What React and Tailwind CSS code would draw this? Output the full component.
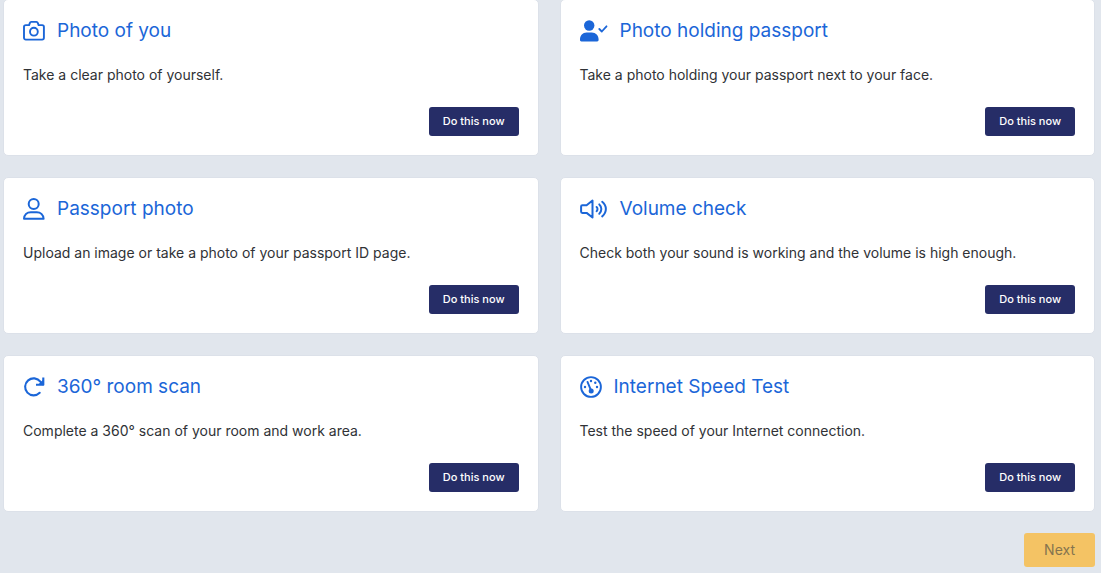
function CameraIcon() {
  return (
    <svg viewBox="0 0 22 22" className="h-[22px] w-[22px]" fill="none" stroke="currentColor" strokeWidth="1.9" strokeLinejoin="round" aria-hidden="true">
      <path d="M2.9 5.1h3.2l.8-2.2c.2-.6.7-1 1.3-1h5.2c.7 0 1.2.4 1.4 1l.8 2.2h3.5c1 0 1.8.7 1.8 1.7v11c0 1-.8 1.8-1.8 1.8H2.8c-1 0-1.8-.8-1.8-1.8v-11c0-1 .8-1.7 1.9-1.7Z" />
      <circle cx="10.9" cy="11.7" r="3.9" />
    </svg>
  );
}

function UserCheckIcon() {
  return (
    <svg viewBox="0 0 28 22" className="h-[22px] w-7" fill="currentColor" aria-hidden="true">
      <circle cx="9.2" cy="5.5" r="5.2" />
      <path d="M6.6 12.6h5.2c4 0 6.8 3 6.8 6.8v.7c0 .9-.6 1.4-1.4 1.4H1.4c-.9 0-1.4-.6-1.4-1.4v-.7c0-3.8 2.7-6.8 6.6-6.8Z" />
      <path d="m19.3 9 2.5 2.5 4.7-5.2" fill="none" stroke="currentColor" strokeWidth="1.8" strokeLinecap="round" strokeLinejoin="round" />
    </svg>
  );
}

function UserIcon() {
  return (
    <svg viewBox="0 0 22 22" className="h-[22px] w-[22px]" fill="none" stroke="currentColor" strokeWidth="2" strokeLinejoin="round" aria-hidden="true">
      <circle cx="10.7" cy="6" r="5" />
      <path d="M7.8 14.2h6c3.7 0 6.5 2.6 6.8 6.6H1c.2-4 3-6.6 6.8-6.6Z" />
    </svg>
  );
}

function VolumeIcon() {
  return (
    <svg viewBox="0 0 28 22" className="h-[22px] w-7" fill="none" stroke="currentColor" strokeWidth="2" strokeLinecap="round" strokeLinejoin="round" aria-hidden="true">
      <path d="M2.4 7.2h4.2l5.9-4.7v17l-5.9-4.6H2.4c-.8 0-1.3-.5-1.3-1.3V8.5c0-.8.5-1.3 1.3-1.3Z" />
      <path d="M16.6 9c1.2 1 1.2 3.2 0 4.2M19.3 6.4c2.7 2.3 2.7 7.1 0 9.4M22.2 3.8c4.9 3.9 4.9 10.7 0 14.6" />
    </svg>
  );
}

function RotateIcon() {
  return (
    <svg viewBox="0 0 22 22" className="h-[22px] w-[22px]" fill="none" stroke="currentColor" strokeWidth="2.1" aria-hidden="true">
      <path d="M16.7 16.8A8.5 8.5 0 1 1 17.4 5.7L20 8.3" strokeLinecap="round" />
      <path d="M20.3 1.4v7.3H13" strokeLinejoin="round" />
      <path d="M20.3 3.4v5.3H15Z" fill="currentColor" stroke="none" />
    </svg>
  );
}

function GaugeIcon() {
  return (
    <svg viewBox="0 0 22 22" className="h-[22px] w-[22px]" fill="none" stroke="currentColor" strokeWidth="1.9" aria-hidden="true">
      <circle cx="11" cy="11" r="9.9" />
      <path d="m7.5 5.9 3.3 8" strokeLinecap="round" />
      <g fill="currentColor" stroke="none">
        <circle cx="11.2" cy="15" r="2.5" />
        <circle cx="11" cy="5" r="1.2" />
        <circle cx="15.3" cy="6.8" r="1.2" />
        <circle cx="17" cy="11" r="1.2" />
        <circle cx="5" cy="11" r="1.2" />
      </g>
    </svg>
  );
}

const tasks = [
  { title: "Photo of you", text: "Take a clear photo of yourself.", Icon: CameraIcon },
  { title: "Photo holding passport", text: "Take a photo holding your passport next to your face.", Icon: UserCheckIcon },
  { title: "Passport photo", text: "Upload an image or take a photo of your passport ID page.", Icon: UserIcon },
  { title: "Volume check", text: "Check both your sound is working and the volume is high enough.", Icon: VolumeIcon },
  { title: "360° room scan", text: "Complete a 360° scan of your room and work area.", Icon: RotateIcon },
  { title: "Internet Speed Test", text: "Test the speed of your Internet connection.", Icon: GaugeIcon },
];

function TaskCard({ title, text, Icon }) {
  return (
    <section className="flex flex-col rounded-[5px] border border-[#dce1e9] bg-white px-[19px] py-[19px]">
      <h2 className="flex items-center gap-3 text-[19px] leading-6 text-[#1b66d8]">
        <Icon />
        {title}
      </h2>
      <p className="mt-[22px] text-[14px] leading-5 text-[#303236]">{text}</p>
      <button type="button" className="mt-[22px] self-end rounded-[3px] bg-[#262d67] px-3.5 py-1.5 text-[11px] leading-[17px] font-medium text-white">
        Do this now
      </button>
    </section>
  );
}

export default function App() {
  return (
    <main className="-mt-px min-h-screen bg-[#e1e6ed] pr-1.5 pb-1.5 pl-[3px] font-['Inter','Liberation_Sans',sans-serif]">
      <div className="grid grid-cols-2 gap-[21px]">
        {tasks.map((task) => (
          <TaskCard key={task.title} {...task} />
        ))}
      </div>
      <div className="mt-[21px] flex justify-end">
        <button type="button" disabled className="rounded-[3px] bg-[#f4c364] px-5 py-[7px] text-[14px] leading-5 text-[#85744f]">
          Next
        </button>
      </div>
    </main>
  );
}
